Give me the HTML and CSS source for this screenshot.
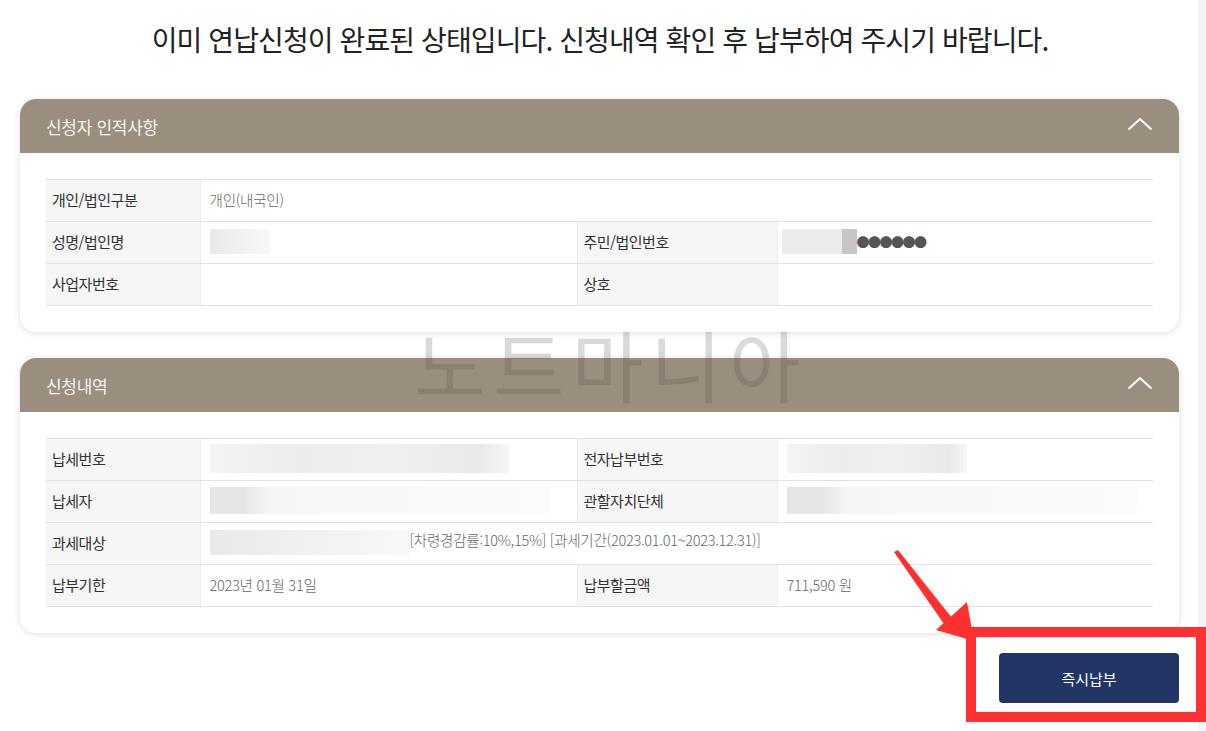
FILE: index.html
```html
<!DOCTYPE html>
<html lang="ko">
<head>
    <meta charset="UTF-8">
    <meta name="viewport" content="width=device-width, initial-scale=1.0">
    <title>연납신청 확인</title>
    <link rel="stylesheet" href="styles.css">
</head>
<body>
    <div class="page">
        <h1 class="notice">이미 연납신청이 완료된 상태입니다. 신청내역 확인 후 납부하여 주시기 바랍니다.</h1>

        <div class="card">
            <div class="card-head">
                <span>신청자 인적사항</span>
                <svg class="chevron" width="26" height="14" viewBox="0 0 26 14"><path d="M1.5 12.5 L13 2 L24.5 12.5" fill="none" stroke="#fff" stroke-width="2"/></svg>
            </div>
            <div class="card-body">
                <table class="info">
                    <colgroup><col class="c1"><col class="c2"><col class="c3"><col class="c4"></colgroup>
                    <tr>
                        <th>개인/법인구분</th>
                        <td colspan="3">개인(내국인)</td>
                    </tr>
                    <tr>
                        <th>성명/법인명</th>
                        <td><span class="blur" style="width:60px"></span></td>
                        <th>주민/법인번호</th>
                        <td><span class="blur first" style="width:60px"></span><span class="blur dark" style="width:15px"></span><span class="dots">●●●●●●</span></td>
                    </tr>
                    <tr>
                        <th>사업자번호</th>
                        <td></td>
                        <th>상호</th>
                        <td></td>
                    </tr>
                </table>
            </div>
        </div>

        <div class="card">
            <div class="card-head">
                <span>신청내역</span>
                <svg class="chevron" width="26" height="14" viewBox="0 0 26 14"><path d="M1.5 12.5 L13 2 L24.5 12.5" fill="none" stroke="#fff" stroke-width="2"/></svg>
            </div>
            <div class="card-body">
                <table class="info">
                    <colgroup><col class="c1"><col class="c2"><col class="c3"><col class="c4"></colgroup>
                    <tr>
                        <th>납세번호</th>
                        <td><span class="blur wide" style="width:300px"></span></td>
                        <th>전자납부번호</th>
                        <td><span class="blur wide" style="width:180px"></span></td>
                    </tr>
                    <tr>
                        <th>납세자</th>
                        <td><span class="blur fade" style="width:340px"></span></td>
                        <th>관할자치단체</th>
                        <td><span class="blur fade" style="width:350px"></span></td>
                    </tr>
                    <tr>
                        <th>과세대상</th>
                        <td colspan="3"><span class="blur" style="width:200px"></span>[차령경감률:10%,15%] [과세기간(2023.01.01~2023.12.31)]</td>
                    </tr>
                    <tr>
                        <th>납부기한</th>
                        <td>2023년 01월 31일</td>
                        <th>납부할금액</th>
                        <td>711,590 원</td>
                    </tr>
                </table>
            </div>
        </div>

        <div class="actions">
            <button type="button" class="pay-button">즉시납부</button>
        </div>
    </div>

    <div class="watermark">노트마니아</div>
    <div class="scrollbar"></div>

    <!-- red annotation over the screenshot -->
    <svg class="annot-arrow" width="100" height="100" viewBox="0 0 100 100">
        <path d="M2 2 L6 0 L60 68 L52 74 Z" fill="#ff3030"/>
        <polygon points="44,80 75,52 82,91" fill="#ff3030"/>
    </svg>
    <div class="annot-box"></div>
</body>
</html>
```

FILE: styles.css
```css
body {
    margin: 0;
    padding: 0;
    background-color: #fff;
    font-family: "Noto Sans CJK KR", "Noto Sans", sans-serif;
    color: #333;
}
.page {
    width: 1159px;
    padding-left: 20px;
}
.notice {
    margin: 0;
    padding: 20px 0 41px;
    font-size: 28px;
    line-height: 38px;
    font-weight: 400;
    text-align: center;
    letter-spacing: -0.9px;
    color: #222;
    width: 1160px;
}
.card {
    background-color: #fff;
    border-radius: 16px;
    box-shadow: 0 1px 7px rgba(0, 0, 0, 0.13);
    margin-bottom: 26px;
    overflow: hidden;
}
.card-head {
    height: 54px;
    background-color: #9a8f7e;
    color: #f6f3ee;
    display: flex;
    align-items: center;
    justify-content: space-between;
    padding: 0 26px;
    font-size: 17px;
    letter-spacing: -0.3px;
}
.chevron {
    display: block;
    margin-top: -4px;
}
.card-body {
    padding: 26px 26px 26px;
}
.info {
    width: 100%;
    border-collapse: collapse;
    table-layout: fixed;
    border-top: 1px solid #dedede;
    font-size: 14px;
}
.c1 { width: 154px; }
.c2 { width: 377px; }
.c3 { width: 200px; }
.info th,
.info td {
    height: 39px;
    border-bottom: 1px solid #e2e2e2;
    padding: 0 8px 2px;
    line-height: 20px;
    text-align: left;
    vertical-align: middle;
    white-space: nowrap;
    overflow: hidden;
}
.info th {
    background-color: #f6f6f6;
    font-weight: 400;
    font-size: 15px;
    color: #333;
    padding-left: 6px;
    letter-spacing: -0.5px;
}
.info td {
    color: #666;
    font-weight: 300;
    font-size: 14.6px;
    letter-spacing: -0.3px;
    padding-left: 9px;
    border-left: 1px solid #ececec;
}
.info td + th {
    border-left: 1px solid #ececec;
}
.blur {
    display: inline-block;
    vertical-align: middle;
    height: 25px;
    background: linear-gradient(90deg, #e9e9e9 0%, #f2f2f2 55%, #f8f8f8 100%);
}
.blur.first {
    margin-left: -5px;
    background: #ececec;
}
.blur.dark {
    background: #c6c6c6;
}
.blur.wide {
    height: 29px;
    background: linear-gradient(90deg, #f4f4f4 0%, #ececec 30%, #f0f0f0 60%, #e9e9e9 90%, #f7f7f7 100%);
}
.blur.fade {
    height: 27px;
    background: linear-gradient(90deg, #e6e6e6 0%, #e6e6e6 10%, #f6f6f6 18%, #fbfbfb 100%);
}
.dots {
    color: #555;
    font-size: 13px;
    letter-spacing: -1.5px;
    vertical-align: middle;
}
.actions {
    display: flex;
    justify-content: flex-end;
    margin-top: -6px;
}
.pay-button {
    width: 180px;
    height: 50px;
    border: none;
    border-radius: 4px;
    background-color: #213567;
    color: #fff;
    font-family: inherit;
    font-size: 15px;
    cursor: pointer;
}
.watermark {
    position: absolute;
    left: 414px;
    top: 308px;
    font-size: 78px;
    line-height: 110px;
    color: rgba(70, 70, 70, 0.2);
    letter-spacing: 7px;
    pointer-events: none;
}
.scrollbar {
    position: absolute;
    right: 0;
    top: 0;
    width: 8px;
    height: 731px;
    background-color: #f3f3f3;
}
.annot-arrow {
    position: absolute;
    left: 892px;
    top: 550px;
}
.annot-box {
    position: absolute;
    left: 966px;
    top: 627px;
    width: 220px;
    height: 75px;
    border: 10px solid #ff3030;
}
```
